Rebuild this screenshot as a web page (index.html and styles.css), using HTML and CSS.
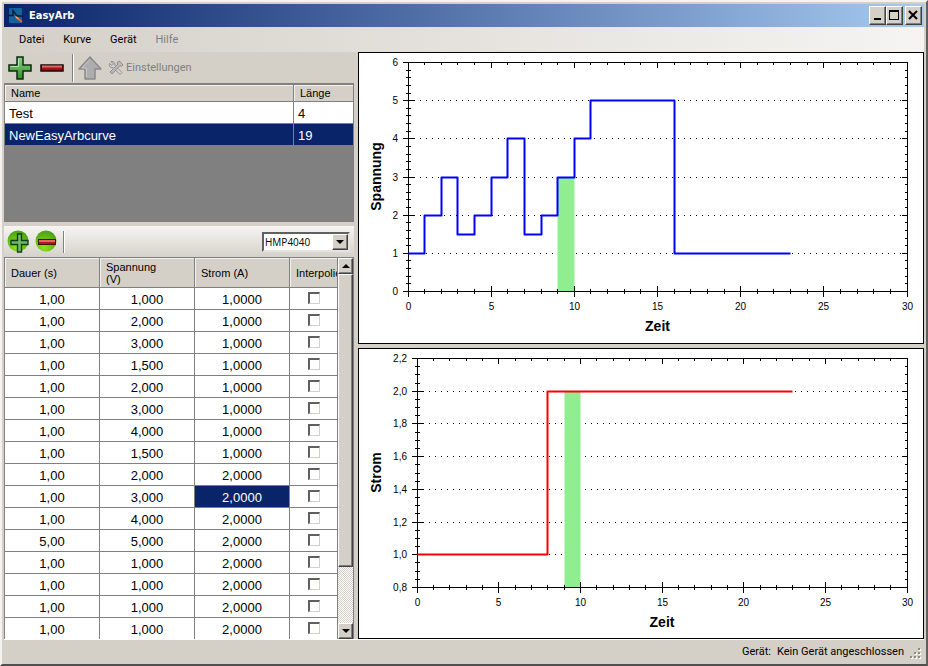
FILE: index.html
```html
<!DOCTYPE html>
<html lang="de">
<head>
    <meta charset="UTF-8">
    <meta name="viewport" content="width=device-width, initial-scale=1.0">
    <title>EasyArb</title>
    <link rel="stylesheet" href="styles.css">
</head>
<body>
    <div class="window">
        <header class="titlebar">
            <svg class="app-icon" width="16" height="16" viewBox="0 0 16 16" aria-hidden="true">
                <rect x="1" y="0" width="13" height="15" rx="1" fill="#14629f"/>
                <path d="M0 7.500h5V2.500l4 5.500h6" fill="none" stroke="#071a33" stroke-width="1.300"/>
                <path d="M8 9l6 5" stroke="#e8602c" stroke-width="2"/>
                <path d="M7.500 8.500l3 2.500" stroke="#f4c9b0" stroke-width="1"/>
            </svg>
            <h1>EasyArb</h1>
            <div class="window-buttons">
                <button type="button" aria-label="Minimieren">
                    <svg width="11" height="11" viewBox="0 0 11 11"><path d="M2 8h7v2H2z"/></svg>
                </button>
                <button type="button" aria-label="Maximieren">
                    <svg width="11" height="11" viewBox="0 0 11 11"><path d="M0 0h10v10H0zM1 2v7h8V2z" fill-rule="evenodd"/></svg>
                </button>
                <button type="button" class="close" aria-label="Schließen">
                    <svg width="11" height="11" viewBox="0 0 11 11"><path d="M1 1l8 8M9 1l-8 8" stroke="#000" stroke-width="2"/></svg>
                </button>
            </div>
        </header>

        <nav class="menubar">
            <button type="button">Datei</button>
            <button type="button">Kurve</button>
            <button type="button">Gerät</button>
            <button type="button" disabled>Hilfe</button>
        </nav>

        <main class="content">
            <section class="sidebar">
                <div class="toolbar">
                    <button type="button" aria-label="Kurve hinzufügen">
                        <svg width="24" height="24" viewBox="0 0 24 24">
                            <defs>
                                <linearGradient id="green" x1="0" y1="0" x2="0" y2="1">
                                    <stop offset="0" stop-color="#8fd08a"/>
                                    <stop offset="1" stop-color="#2f8f2c"/>
                                </linearGradient>
                            </defs>
                            <path d="M9 1h6v8h8v6h-8v8H9v-8H1V9h8z" fill="url(#green)" stroke="#0b2a0b" stroke-width="1.500"/>
                            <path d="M10.500 2.500v8h-8" fill="none" stroke="#b5e4b1"/>
                        </svg>
                    </button>
                    <button type="button" aria-label="Kurve entfernen">
                        <svg width="24" height="24" viewBox="0 0 24 24">
                            <rect x="1" y="9" width="22" height="6" fill="#a50f14" stroke="#1c0505" stroke-width="1.500"/>
                            <path d="M2 10.500h20" stroke="#d86a6a" stroke-width="2"/>
                        </svg>
                    </button>
                    <span class="separator"></span>
                    <button type="button" aria-label="Übertragen" disabled>
                        <svg width="24" height="24" viewBox="0 0 24 24">
                            <path d="M12 1l11 12h-6v10H7V13H1z" fill="#adadad" stroke="#8b8b8b" stroke-width="1.500" stroke-linejoin="round"/>
                            <path d="M12 3L4 12h4.500v9" fill="none" stroke="#c6c6c6"/>
                        </svg>
                    </button>
                    <button type="button" class="settings" disabled>
                        <svg width="16" height="16" viewBox="0 0 16 16">
                            <path d="M3 1.500l2.500 2.500L4 5.500 1.500 3.500C.5 6 2.500 8 5 7.500l7 7 2-2-7-7C7.500 3 5.500 1 3 1.500z" fill="#d6d4d0" stroke="#8d8d8d"/>
                            <path d="M9 2.500L11.500 1l3.500 4-1.500 1.500-1.500-1-8 8.500-2-2 8-8z" fill="#bcbab6" stroke="#8d8d8d"/>
                        </svg>
                        Einstellungen
                    </button>
                </div>

                <div class="curve-list">
                    <table>
                        <thead>
                            <tr><th>Name</th><th class="col-length">Länge</th></tr>
                        </thead>
                        <tbody>
                            <tr><td>Test</td><td>4</td></tr>
                            <tr class="selected"><td>NewEasyArbcurve</td><td>19</td></tr>
                        </tbody>
                    </table>
                </div>

                <div class="toolbar toolbar-points">
                    <button type="button" aria-label="Punkt hinzufügen">
                        <svg width="24" height="24" viewBox="0 0 24 24">
                            <defs>
                                <radialGradient id="ball" cx=".4" cy=".8" r=".9">
                                    <stop offset="0" stop-color="#8fe01c"/>
                                    <stop offset="1" stop-color="#3f9a12"/>
                                </radialGradient>
                            </defs>
                            <circle cx="11" cy="11" r="10.500" fill="url(#ball)"/>
                            <path d="M10.500 4h4v6.500h6.500v4h-6.500V22h-4v-7.500H4v-4h6.500z" fill="#6cb86c" stroke="#123c12" stroke-width="1.300"/>
                        </svg>
                    </button>
                    <button type="button" aria-label="Punkt entfernen">
                        <svg width="24" height="24" viewBox="0 0 24 24">
                            <circle cx="11" cy="11" r="10.500" fill="url(#ball)"/>
                            <rect x="3.500" y="9.500" width="17" height="5" fill="#b8161b" stroke="#4a1208"/>
                            <path d="M4 11h16" stroke="#dd6a6a" stroke-width="2"/>
                        </svg>
                    </button>
                    <span class="separator"></span>
                    <div class="device">
                        <select aria-label="Gerätetyp">
                            <option>HMP4040</option>
                        </select>
                        <span class="device-arrow"><i class="arrow-down"></i></span>
                    </div>
                </div>

                <div class="point-list">
                    <table>
                        <thead>
                            <tr><th>Dauer (s)</th><th>Spannung (V)</th><th>Strom (A)</th><th class="col-interpolate">Interpolie</th></tr>
                        </thead>
                        <tbody>
                            <tr><td>1,00</td><td>1,000</td><td>1,0000</td><td><input type="checkbox" aria-label="Interpolieren 1"></td></tr>
                            <tr><td>1,00</td><td>2,000</td><td>1,0000</td><td><input type="checkbox" aria-label="Interpolieren 2"></td></tr>
                            <tr><td>1,00</td><td>3,000</td><td>1,0000</td><td><input type="checkbox" aria-label="Interpolieren 3"></td></tr>
                            <tr><td>1,00</td><td>1,500</td><td>1,0000</td><td><input type="checkbox" aria-label="Interpolieren 4"></td></tr>
                            <tr><td>1,00</td><td>2,000</td><td>1,0000</td><td><input type="checkbox" aria-label="Interpolieren 5"></td></tr>
                            <tr><td>1,00</td><td>3,000</td><td>1,0000</td><td><input type="checkbox" aria-label="Interpolieren 6"></td></tr>
                            <tr><td>1,00</td><td>4,000</td><td>1,0000</td><td><input type="checkbox" aria-label="Interpolieren 7"></td></tr>
                            <tr><td>1,00</td><td>1,500</td><td>1,0000</td><td><input type="checkbox" aria-label="Interpolieren 8"></td></tr>
                            <tr><td>1,00</td><td>2,000</td><td>2,0000</td><td><input type="checkbox" aria-label="Interpolieren 9"></td></tr>
                            <tr><td>1,00</td><td>3,000</td><td class="selected">2,0000</td><td><input type="checkbox" aria-label="Interpolieren 10"></td></tr>
                            <tr><td>1,00</td><td>4,000</td><td>2,0000</td><td><input type="checkbox" aria-label="Interpolieren 11"></td></tr>
                            <tr><td>5,00</td><td>5,000</td><td>2,0000</td><td><input type="checkbox" aria-label="Interpolieren 12"></td></tr>
                            <tr><td>1,00</td><td>1,000</td><td>2,0000</td><td><input type="checkbox" aria-label="Interpolieren 13"></td></tr>
                            <tr><td>1,00</td><td>1,000</td><td>2,0000</td><td><input type="checkbox" aria-label="Interpolieren 14"></td></tr>
                            <tr><td>1,00</td><td>1,000</td><td>2,0000</td><td><input type="checkbox" aria-label="Interpolieren 15"></td></tr>
                            <tr><td>1,00</td><td>1,000</td><td>2,0000</td><td><input type="checkbox" aria-label="Interpolieren 16"></td></tr>
                        </tbody>
                    </table>
                    <div class="scrollbar">
                        <button type="button" aria-label="Nach oben"><i class="arrow-up"></i></button>
                        <div class="track"><div class="thumb"></div></div>
                        <button type="button" aria-label="Nach unten"><i class="arrow-down"></i></button>
                    </div>
                </div>
            </section>

            <section class="charts">
                <div class="chart" id="voltageChart"></div>
                <div class="chart" id="currentChart"></div>
            </section>
        </main>

        <footer class="statusbar">
            <span>Gerät:</span>
            <span>Kein Gerät angeschlossen</span>
            <svg width="12" height="12" viewBox="0 0 12 12" aria-hidden="true">
                <path d="M9 1h2v2H9zM5 5h2v2H5zM9 5h2v2H9zM1 9h2v2H1zM5 9h2v2H5zM9 9h2v2H9z" fill="#fff"/>
                <path d="M8 0h2v2H8zM4 4h2v2H4zM8 4h2v2H8zM0 8h2v2H0zM4 8h2v2H4zM8 8h2v2H8z" fill="#8f8c85"/>
            </svg>
        </footer>
    </div>

    <script src="charts.js"></script>
</body>
</html>
```

FILE: styles.css
```css
* {
    box-sizing: border-box;
}

body {
    margin: 0;
    font-family: Tahoma, Roboto, sans-serif;
    font-size: 11px;
    color: #000;
    background-color: #d4d0c8;
}

button {
    padding: 0;
    border: none;
    background: none;
    font: inherit;
    color: inherit;
}

button:disabled {
    color: #808080;
}

.window {
    display: flex;
    flex-direction: column;
    height: 100vh;
    padding: 2px;
    background-color: #d4d0c8;
    border: 2px solid;
    border-color: #f4f3f0 #606060 #505050 #f4f3f0;
}

/* Titelleiste */
.titlebar {
    display: flex;
    align-items: center;
    height: 23px;
    padding: 0 2px 0 4px;
    background: linear-gradient(to right, #0a246a, #a6caf0);
}

.titlebar h1 {
    flex: 1;
    margin: 0 0 0 5px;
    font-family: "DejaVu Sans Condensed", "DejaVu Sans", sans-serif;
    font-size: 11px;
    font-weight: bold;
    color: white;
}

.window-buttons {
    display: flex;
}

.window-buttons button {
    display: flex;
    align-items: center;
    justify-content: center;
    width: 17px;
    height: 19px;
}

.window-buttons .close {
    margin-left: 2px;
}

.window-buttons button,
.scrollbar button,
.thumb,
.device-arrow {
    background-color: #d4d0c8;
    border: 1px solid;
    border-color: #fff #404040 #404040 #fff;
    box-shadow: inset -1px -1px #808080;
}

/* Menü */
.menubar {
    display: flex;
    align-items: center;
    gap: 19px;
    height: 25px;
    padding-left: 15px;
    background: linear-gradient(to right, #d4d0c8, #f5f4f2);
}

.content {
    flex: 1;
    display: grid;
    grid-template-columns: 350px 1fr;
    gap: 4px;
    min-height: 0;
}

.sidebar {
    display: flex;
    flex-direction: column;
    min-height: 0;
}

.toolbar {
    display: flex;
    align-items: center;
    gap: 8px;
    height: 32px;
    padding-left: 4px;
    border-bottom: 1px solid #808080;
}

.toolbar svg {
    display: block;
}

.toolbar .separator {
    width: 2px;
    height: 28px;
    margin-right: -4px;
    border-left: 1px solid #808080;
    border-right: 1px solid #fff;
}

.toolbar .settings {
    display: flex;
    align-items: center;
    gap: 2px;
    margin-left: -2px;
}

.toolbar-points {
    gap: 4px;
    height: 31px;
    margin-top: 4px;
    padding-left: 3px;
    padding-right: 4px;
    border-bottom: none;
    background: linear-gradient(to bottom, #f6f5f3, #d6d2ca);
}

.toolbar-points .separator {
    height: 22px;
    margin-right: 0;
}

.device {
    position: relative;
    width: 88px;
    height: 20px;
    margin-left: auto;
    background-color: white;
    border: 2px solid;
    border-color: #606060 #e6e3dc #e6e3dc #606060;
}

.device select {
    display: block;
    width: 100%;
    height: 16px;
    padding: 0 0 0 1px;
    border: none;
    appearance: none;
    background: none;
    font-family: Tahoma, "Open Sans", sans-serif;
    font-size: 10px;
}

.device-arrow {
    position: absolute;
    top: 0;
    right: 0;
    display: flex;
    align-items: center;
    justify-content: center;
    width: 16px;
    height: 16px;
    pointer-events: none;
}

.arrow-down,
.arrow-up {
    border: 4px solid transparent;
}

.arrow-down {
    border-top-color: #000;
    border-bottom: none;
}

.arrow-up {
    border-bottom-color: #000;
    border-top: none;
}

/* Tabellen */
table {
    width: 100%;
    border-spacing: 0;
    table-layout: fixed;
    font-family: "Liberation Sans", Arial, sans-serif;
}

th,
td {
    padding: 0;
    border-right: 1px solid #808080;
    border-bottom: 1px solid #808080;
}

th {
    padding-left: 6px;
    overflow: hidden;
    background-color: #d4d0c8;
    box-shadow: inset 1px 1px #f4f2ee;
    font-size: 11px;
    font-weight: normal;
    line-height: 12px;
    text-align: left;
}

td {
    height: 22px;
    padding-top: 2px;
    background-color: white;
    font-size: 13px;
    line-height: 19px;
}

.selected td,
td.selected {
    background-color: #0a246a;
    color: white;
}

.curve-list {
    height: 138px;
    background-color: #808080;
    border-top: 1px solid #808080;
    border-left: 1px solid #808080;
}

.curve-list th {
    height: 17px;
}

.curve-list td {
    padding-left: 4px;
}

.curve-list .col-length {
    width: 60px;
}

.point-list {
    flex: 1;
    display: flex;
    min-height: 0;
    border-top: 1px solid #808080;
    border-left: 1px solid #808080;
    border-right: 1px solid #808080;
    background-color: #808080;
}

.point-list table {
    flex: 1;
    align-self: flex-start;
}

.point-list th {
    height: 30px;
    padding-right: 30px;
}

.point-list th:nth-child(3) {
    padding-right: 6px;
}

.point-list .col-interpolate {
    width: 48px;
    padding-right: 0;
}

.point-list td {
    text-align: center;
}

input[type="checkbox"] {
    display: block;
    width: 12px;
    height: 12px;
    margin: 0 auto 4px;
    appearance: none;
    background-color: white;
    border: 2px solid;
    border-width: 2px 1px 1px 2px;
    border-color: #606060 #d4d0c8 #d4d0c8 #606060;
}

.scrollbar {
    display: flex;
    flex-direction: column;
    width: 15px;
}

.scrollbar button {
    display: flex;
    align-items: center;
    justify-content: center;
    width: 15px;
    height: 16px;
}

.track {
    flex: 1;
    background: repeating-conic-gradient(#fff 0 25%, #d4d0c8 0 50%) 0 0 / 2px 2px;
}

.thumb {
    height: 84%;
}

/* Diagramme */
.charts {
    display: flex;
    flex-direction: column;
    gap: 4px;
    min-width: 0;
    min-height: 0;
}

.chart {
    flex: 1;
    min-height: 0;
    background-color: white;
    border: 1px solid #000;
    overflow: hidden;
}

.chart svg {
    display: block;
    font-family: "Liberation Sans", Arial, sans-serif;
    font-size: 10px;
}

.axis {
    fill: none;
    stroke: #000;
    shape-rendering: crispEdges;
}

.grid {
    stroke: #000;
    stroke-dasharray: 1 5;
    shape-rendering: crispEdges;
}

.marker {
    fill: #90ee90;
}

.curve {
    fill: none;
    stroke-width: 2;
    stroke-linejoin: round;
}

.axis-title {
    font-size: 14px;
    font-weight: bold;
}

.statusbar {
    display: flex;
    align-items: center;
    justify-content: flex-end;
    gap: 6px;
    height: 23px;
    padding-right: 2px;
    border-top: 1px solid #fff;
}

.statusbar svg {
    align-self: flex-end;
    margin-bottom: 2px;
}
```

FILE: charts.js
```js
// Dauer, Spannung, Strom
const points = [
    [1, 1, 1], [1, 2, 1], [1, 3, 1], [1, 1.5, 1], [1, 2, 1],
    [1, 3, 1], [1, 4, 1], [1, 1.5, 1], [1, 2, 2], [1, 3, 2],
    [1, 4, 2], [5, 5, 2], [1, 1, 2], [1, 1, 2], [1, 1, 2],
    [1, 1, 2], [1, 1, 2], [1, 1, 2], [1, 1, 2]
];
const selectedPoint = 9;
const maxTime = 30;

function drawChart(id, opt) {
    const box = document.getElementById(id);
    const width = box.clientWidth;
    const height = box.clientHeight;
    const left = opt.left;
    const right = width - 16;
    const top = 9;
    const bottom = height - 52;

    const x = t => Math.floor(left + t / maxTime * (right - left)) + 0.5;
    const y = v => Math.round(bottom - (v - opt.min) / (opt.max - opt.min) * (bottom - top)) + 0.5;

    let axis = `M${x(0)} ${y(opt.max)}H${x(maxTime)}V${y(opt.min)}H${x(0)}Z`;
    let grid = '';
    let labels = '';

    // Zeitachse
    for (let t = 0; t <= maxTime; t++) {
        const major = t % 5 === 0;
        const size = major ? 5 : 2;
        axis += `M${x(t)} ${bottom - size}v${size * 2 + 1}M${x(t)} ${top}v${size + 1}`;
        if (major) {
            labels += `<text x="${x(t)}" y="${bottom + 19}" text-anchor="middle">${t}</text>`;
        }
    }

    // Werteachse
    const steps = Math.round((opt.max - opt.min) / opt.minor);
    for (let i = 0; i <= steps; i++) {
        const v = opt.min + i * opt.minor;
        const major = i % opt.majorEvery === 0;
        const size = major ? 5 : 2;
        axis += `M${left - size} ${y(v)}h${size * 2 + 1}M${right - size} ${y(v)}h${size}`;
        if (major) {
            const text = v.toFixed(opt.digits).replace('.', ',');
            labels += `<text x="${left - 10}" y="${y(v) + 3.5}" text-anchor="end">${text}</text>`;
            if (i > 0 && i < steps) {
                grid += `<path class="grid" d="M${left + 6} ${y(v)}H${right}"/>`;
            }
        }
    }

    // Stufenkurve
    let time = 0;
    let curve = '';
    let marker = '';
    points.forEach((p, i) => {
        const value = p[opt.column];
        curve += (i === 0 ? `M${x(0)} ${y(value)}` : `V${y(value)}`) + `H${x(time + p[0])}`;
        if (i === selectedPoint) {
            marker = `<rect class="marker" x="${x(time)}" y="${y(value)}" width="${x(time + p[0]) - x(time)}" height="${y(opt.min) - y(value)}"/>`;
        }
        time += p[0];
    });

    const middle = (top + bottom) / 2;
    box.innerHTML = `
        <svg width="${width}" height="${height}" role="img" aria-label="${opt.title}">
            ${grid}
            ${marker}
            <path class="axis" d="${axis}"/>
            <path class="curve" stroke="${opt.color}" d="${curve}"/>
            ${labels}
            <text class="axis-title" x="${(left + right) / 2}" y="${bottom + 40}" text-anchor="middle">Zeit</text>
            <text class="axis-title" transform="translate(22 ${middle}) rotate(-90)" text-anchor="middle">${opt.title}</text>
        </svg>`;
}

function drawAll() {
    drawChart('voltageChart', {
        title: 'Spannung', column: 1, color: '#0000ff',
        left: 49, min: 0, max: 6, minor: 0.2, majorEvery: 5, digits: 0
    });
    drawChart('currentChart', {
        title: 'Strom', column: 2, color: '#ff0000',
        left: 58, min: 0.8, max: 2.2, minor: 0.05, majorEvery: 4, digits: 1
    });
}

window.addEventListener('resize', drawAll);
drawAll();
```
